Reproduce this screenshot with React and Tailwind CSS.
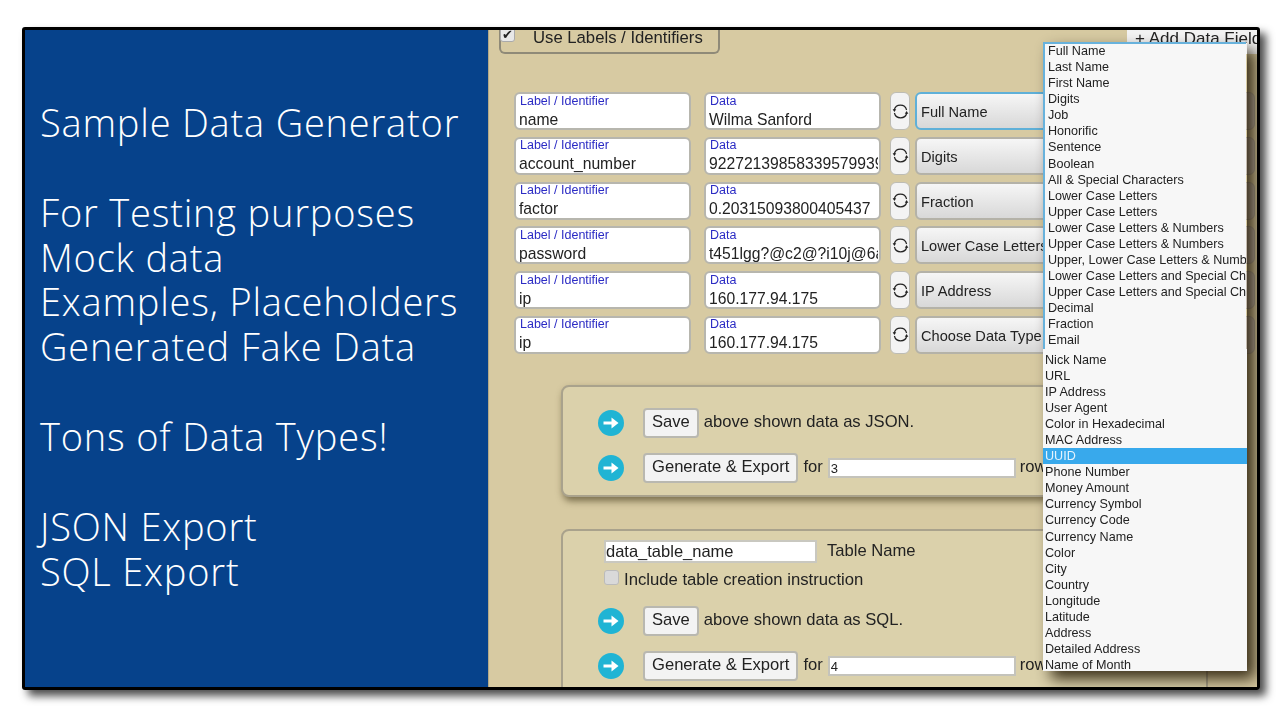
const Arrow = () => (
  <svg width="26" height="26" viewBox="0 0 26 26" className="shrink-0">
    <circle cx="13" cy="13" r="13" fill="#20b4d4" />
    <path d="M5.5 13H15" stroke="#fff" strokeWidth="3" />
    <path d="M13.5 7.5 20.5 13l-7 5.5z" fill="#fff" />
  </svg>
);

const Sync = () => (
  <svg width="17" height="17" viewBox="0 0 17 17" fill="none" stroke="#222" strokeWidth="1.2">
    <path d="M2.2 7A6.4 6.4 0 0 1 14.6 7" />
    <path d="M14.8 10A6.4 6.4 0 0 1 2.4 10" />
    <path d="M0.6 6.2h3.6L2.4 9z" fill="#222" stroke="none" />
    <path d="M12.8 10.8h3.6L14.6 8z" fill="#222" stroke="none" />
  </svg>
);

const rows = [
  { label: 'name', data: 'Wilma Sanford', type: 'Full Name', focus: true },
  { label: 'account_number', data: '9227213985833957993957', type: 'Digits' },
  { label: 'factor', data: '0.20315093800405437', type: 'Fraction' },
  { label: 'password', data: 't451lgg?@c2@?i10j@6a9xk', type: 'Lower Case Letters' },
  { label: 'ip', data: '160.177.94.175', type: 'IP Address' },
  { label: 'ip', data: '160.177.94.175', type: 'Choose Data Type' },
];

const listOne = [
  'Full Name', 'Last Name', 'First Name', 'Digits', 'Job', 'Honorific', 'Sentence', 'Boolean',
  'All & Special Characters', 'Lower Case Letters', 'Upper Case Letters', 'Lower Case Letters & Numbers',
  'Upper Case Letters & Numbers', 'Upper, Lower Case Letters & Numbers', 'Lower Case Letters and Special Characters',
  'Upper Case Letters and Special Characters', 'Decimal', 'Fraction', 'Email',
];

const listTwo = [
  'Nick Name', 'URL', 'IP Address', 'User Agent', 'Color in Hexadecimal', 'MAC Address', 'UUID', 'Phone Number',
  'Money Amount', 'Currency Symbol', 'Currency Code', 'Currency Name', 'Color', 'City', 'Country', 'Longitude',
  'Latitude', 'Address', 'Detailed Address', 'Name of Month',
];

const Field = ({ title, value }) => (
  <div className="h-[38px] w-[177px] rounded-md border-2 border-[#b7b6ae] bg-white pl-[3px] pr-[1px]">
    <div className="-mt-[0.5px] pl-[1px] text-[12.5px] leading-[14px] text-[#2b2bc4]">{title}</div>
    <div className="mt-[2px] overflow-hidden whitespace-nowrap text-[15.7px] leading-[20px] text-[#222]">{value}</div>
  </div>
);

const Row = ({ label, data, type, focus }) => (
  <div className="flex h-[38px] items-center">
    <Field title="Label / Identifier" value={label} />
    <div className="ml-[13px]">
      <Field title="Data" value={data} />
    </div>
    <div className="ml-[9px] flex h-[38px] w-[20px] items-center justify-center rounded-md border border-[#bdbcb4] bg-[#f3f3f3]">
      <Sync />
    </div>
    <div
      className={`ml-[5px] flex h-[38px] w-[304px] items-center overflow-hidden whitespace-nowrap rounded-md border-2 bg-gradient-to-b from-[#f6f6f6] to-[#d8d8d8] pl-[4px] pt-[4px] text-[14.6px] text-[#222] ${focus ? 'border-[#5fb0d8]' : 'border-[#b4b2a8]'}`}
    >
      {type}
    </div>
    <div className="ml-[2px] flex h-[38px] w-[34px] items-center justify-end rounded-md border border-[#b0a99c] bg-[#c4bbaf] pr-[9px] text-[15px] text-[#333]">
      x
    </div>
  </div>
);

const ActionButton = ({ children }) => (
  <div className="flex h-[30px] items-center rounded-[4px] border-2 border-[#b9b8b0] bg-[#f3f3f3] px-[7px] text-[16.6px] text-[#222]">
    {children}
  </div>
);

const ExportRows = ({ kind, count }) => (
  <div className="flex flex-col gap-[15px] pl-[35px] text-[16.6px]">
    <div className="flex items-center gap-[19px]">
      <Arrow />
      <div className="flex items-center gap-[5px]">
        <ActionButton>Save</ActionButton>
        <span>above shown data as {kind}.</span>
      </div>
    </div>
    <div className="flex items-center gap-[19px]">
      <Arrow />
      <div className="flex items-center whitespace-nowrap">
        <ActionButton>Generate &amp; Export</ActionButton>
        <span className="ml-[5px]">for</span>
        <div className="ml-[5px] h-[20px] w-[188px] border-2 border-[#c4c3bb] bg-white pl-[1px] text-[13px] leading-[17px]">{count}</div>
        <span className="ml-[4px]">rows</span>
      </div>
    </div>
  </div>
);

const Dropdown = () => (
  <div className="absolute left-[554px] top-[12px] h-[629px] w-[204px] overflow-hidden text-[12.6px] leading-[16.08px] text-[#222] shadow-[8px_8px_14px_rgba(30,20,0,0.85)]">
    <div className="h-[307px] w-[203px] overflow-hidden border-l-2 border-t-2 border-[#68b2dc] bg-[#f7f7f7] pl-[3px]">
      <div className="-mt-[1px]">
        {listOne.map((item) => (
          <div key={item} className="whitespace-nowrap">{item}</div>
        ))}
      </div>
    </div>
    <div className="h-[322px] overflow-hidden bg-[#f7f7f7] pt-[2.5px]">
      {listTwo.map((item) => (
        <div
          key={item}
          className={`whitespace-nowrap pl-[2px] leading-[16.1px] ${item === 'UUID' ? 'bg-[#38a9ec] text-[#e4f3fd]' : ''}`}
        >
          {item}
        </div>
      ))}
    </div>
  </div>
);

export default function App() {
  return (
    <div className="h-[720px] w-[1280px] overflow-hidden bg-white pl-[22px] pt-[27px]">
      <div className="flex h-[663px] w-[1238px] overflow-hidden rounded-[3px] border-[3px] border-black shadow-[6px_6px_8px_rgba(0,0,0,0.7)]">
        {/* Blue promo panel */}
        <div className="w-[463px] shrink-0 bg-[#06428b] pl-[15px] pt-[70px] font-['Open_Sans',sans-serif] text-[38px] font-light leading-[44.8px] tracking-[0.8px] text-white">
          <div>Sample Data Generator</div>
          <div className="mt-[45px]">For Testing purposes</div>
          <div>Mock data</div>
          <div>Examples, Placeholders</div>
          <div>Generated Fake Data</div>
          <div className="mt-[45px]">Tons of Data Types!</div>
          <div className="mt-[45px]">JSON Export</div>
          <div>SQL Export</div>
        </div>

        {/* Screenshot of the generator page */}
        <div className="relative flex-1 overflow-hidden border-l border-[#b4a987] bg-[#d7caa2] font-['Liberation_Sans',sans-serif] text-[16.7px] text-[#222] blur-[0.5px]">
          <div className="flex items-start justify-between">
            <div className="ml-[10px] h-[24px] w-[221px] rounded-b-md border-2 border-t-0 border-[#8f8a78] pl-[32px] leading-[16px]">
              <span className="absolute left-[11px] top-[-3px] h-[15px] w-[15px] rounded-[3px] border border-[#aaa] bg-[#e8e8e8] text-center text-[13px] leading-[13px]">✔</span>
              Use Labels / Identifiers
            </div>
            <div className="h-[24px] w-[130px] overflow-hidden whitespace-nowrap bg-[#f3f3f3] pl-[8px] text-[17px] leading-[18px]">+ Add Data Field</div>
          </div>

          <div className="ml-[25px] mt-[38px] flex flex-col gap-[6.75px]">
            {rows.map((row, i) => (
              <Row key={i} {...row} />
            ))}
          </div>

          <div className="ml-[72px] mt-[31px] h-[112px] w-[647px] rounded-lg border-2 border-[#a9a28c] bg-[#dbd1ab] pt-[21px] shadow-[2px_4px_7px_rgba(60,50,20,0.6)]">
            <ExportRows kind="JSON" count="3" />
          </div>

          <div className="ml-[72px] mt-[32px] h-[190px] w-[647px] rounded-lg border-2 border-[#a9a28c] bg-[#dbd1ab] pt-[8px]">
            <div className="ml-[41px] flex items-center">
              <div className="h-[23px] w-[213px] border-2 border-[#c9c8c0] bg-white text-[16.5px] leading-[19px]">data_table_name</div>
              <span className="ml-[10px] text-[16.6px]">Table Name</span>
            </div>
            <div className="ml-[41px] mt-[6px] flex h-[16px] items-center gap-[5px] text-[16.7px]">
              <div className="h-[15px] w-[15px] rounded-[3px] border border-[#bbb] bg-[#d9d9d9]"></div>
              <span className="pt-[3px]">Include table creation instruction</span>
            </div>
            <div className="mt-[20px]">
              <ExportRows kind="SQL" count="4" />
            </div>
          </div>

          <Dropdown />
        </div>
      </div>
    </div>
  );
}
